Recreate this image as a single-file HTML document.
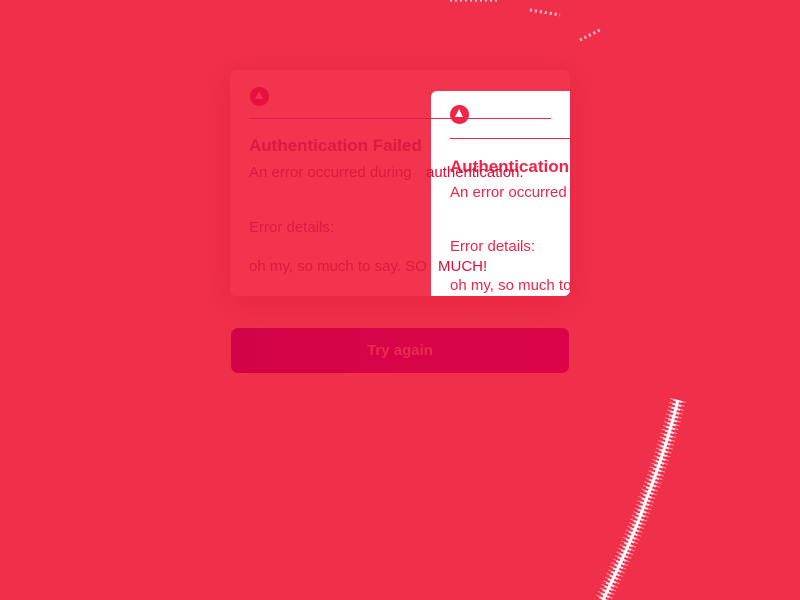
<!DOCTYPE html><html><head><style>
body{margin:0;width:800px;height:600px;overflow:hidden;background:#f0304a;font-family:"Liberation Sans",sans-serif;position:relative}
.card{position:absolute;left:230px;top:70px;width:340px;height:226px;background:#f3344e;border-radius:6px;box-shadow:0 6px 30px rgba(200,0,40,.25);overflow:hidden}
.t{position:absolute;white-space:nowrap;color:#dc1a40}
.ic{position:absolute;width:19px;height:19px;border-radius:50%;background:#e8103e}
.ic:after{content:"";position:absolute;left:5px;top:4px;border-left:4.5px solid transparent;border-right:4.5px solid transparent;border-bottom:8px solid #f3344e}
.w{position:absolute;left:201px;top:21px;width:139px;height:205px;background:#fff;border-top-left-radius:6px;overflow:hidden}
.w .t{color:#ee2546}
.w .ic:after{border-bottom-color:#fff}
.btn{position:absolute;left:231px;top:328px;width:338px;height:45px;border-radius:7px;background:linear-gradient(90deg,#d20447,#dc0448);color:#ea2a4e;font-weight:bold;font-size:15px;text-align:center;line-height:45px}
</style></head><body>
<div class="card">
<div class="ic" style="left:20px;top:17px"></div>
<div style="position:absolute;left:19px;top:48px;width:302px;height:1px;background:#e31e44"></div>
<div class="t" style="left:19px;top:66px;font-size:17px;font-weight:bold">Authentication Failed</div>
<div class="t" style="left:19px;top:94px;font-size:15px">An error occurred during</div>
<div class="t" style="left:19px;top:149px;font-size:15px">Error details:</div>
<div class="t" style="left:19px;top:188px;font-size:15px">oh my, so much to say. SO</div>
<div class="w">
<div class="ic" style="left:19px;top:14px;background:#ee2546"></div>
<div style="position:absolute;left:19px;top:47px;width:140px;height:1px;background:#ee2546"></div>
<div class="t" style="left:19px;top:66px;font-size:17px;font-weight:bold">Authentication</div>
<div class="t" style="left:19px;top:93px;font-size:15px">An error occurred</div>
<div class="t" style="left:19px;top:147px;font-size:15px">Error details:</div>
<div class="t" style="left:19px;top:186px;font-size:15px">oh my, so much to say</div>
</div>
<div class="t" style="left:196px;top:94px;font-size:15px;color:#d8103a">authentication.</div>
<div class="t" style="left:208px;top:188px;font-size:15px;color:#d8103a">MUCH!</div>
<div style="position:absolute;left:201px;top:48px;width:120px;height:1px;background:#ee2546"></div>
</div>
<div class="btn">Try again</div>
<svg width="800" height="600" style="position:absolute;left:0;top:0">
<path d="M678 400 C668 440 658 470 646 500 C636 530 622 560 603 600" stroke="#fff" stroke-width="16" fill="none" stroke-dasharray="1 3" opacity=".5"/>
<path d="M678 400 C668 440 658 470 646 500 C636 530 622 560 603 600" stroke="#fff" stroke-width="9" fill="none" stroke-dasharray="2 2" opacity=".8"/>
<path d="M678 400 C668 440 658 470 646 500 C636 530 622 560 603 600" stroke="#fff" stroke-width="3" fill="none"/>
<path d="M450 0 L500 0 M530 10 L560 15 M580 40 L600 30" stroke="#fff" stroke-width="3" stroke-dasharray="2 3" fill="none" opacity=".7"/>
</svg>
</body></html>
